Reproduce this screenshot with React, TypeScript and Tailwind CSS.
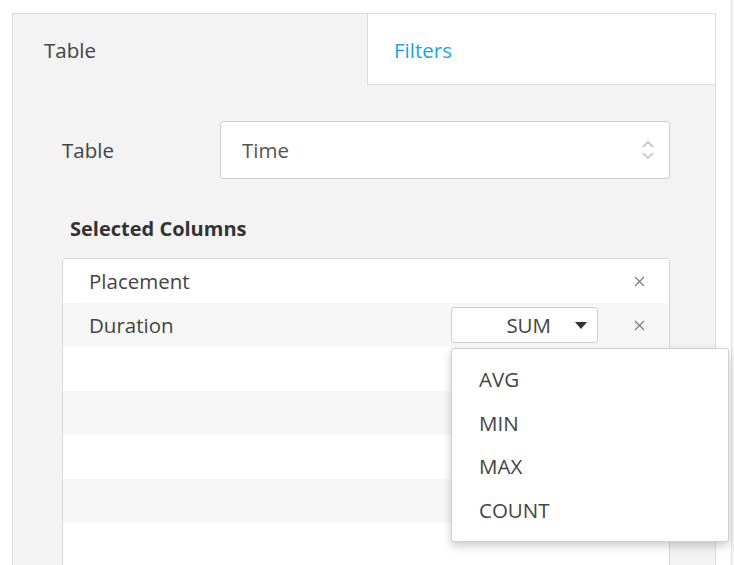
const font = { fontFamily: '"Open Sans", "Liberation Sans", sans-serif' };

const X = () => (
  <svg width="11" height="11" viewBox="0 0 11 11" className="text-[#777]">
    <path d="M1 1L10 10M10 1L1 10" stroke="currentColor" strokeWidth="1.1" />
  </svg>
);

export default function App() {
  const rows = ['bg-white', 'bg-[#f7f7f7]', 'bg-white', 'bg-[#f7f7f7]', 'bg-white', 'bg-[#f7f7f7]', 'bg-white'];
  return (
    <div style={font} className="relative h-[565px] w-[734px] overflow-hidden bg-white">
      <div className="absolute right-0 top-0 h-full w-[3px] border-l border-[#e2e2e2] bg-[#f5f5f5]" />
      <div className="ml-3 mt-[13px] w-[704px] border border-[#dcdcdc] bg-[#f3f3f3]">
        <div className="flex h-[71px]">
          <div className="flex w-[354px] items-center pl-[31px] pt-[2px] text-[20.5px] text-[#444]">Table</div>
          <div className="flex flex-1 items-center border-b border-l border-[#dcdcdc] bg-white pl-[26px] pt-[2px] text-[20.5px] text-[#1aa5e0]">Filters</div>
        </div>
        <div className="pl-[49px] pr-[45px] pt-[36px]">
          <div className="flex items-center">
            <div className="w-[158px] text-[20.5px] text-[#444]">Table</div>
            <div className="flex h-[58px] flex-1 items-center justify-between rounded-[3px] border border-[#cfcfcf] bg-white pl-[21px] pr-[14px] text-[20.5px] text-[#555]">
              <span>Time</span>
              <svg width="14" height="24" viewBox="0 0 14 24" fill="none" stroke="#bbb" strokeWidth="1.5">
                <path d="M2 9L7 4L12 9M2 15L7 20L12 15" />
              </svg>
            </div>
          </div>
          <div className="mt-[35px] pl-[8px] text-[20px] font-bold text-[#333]">Selected Columns</div>
          <div className="mt-[14px] h-[320px] overflow-hidden rounded-t-[3px] border border-[#d8d8d8] bg-white">
            {rows.map((bg, i) => (
              <div key={i} className={`flex h-[44px] items-center pl-[26px] pr-[24px] text-[20.5px] text-[#444] ${bg}`}>
                <span className="flex-1">{i === 0 ? 'Placement' : i === 1 ? 'Duration' : ''}</span>
                {i === 1 && (
                  <div className="mr-[36px] flex h-[36px] w-[147px] items-center justify-end rounded-[3px] border border-[#cfcfcf] bg-white pr-[10px] text-[20.5px] text-[#444]">
                    <span className="mr-[24px]">SUM</span>
                    <svg width="12" height="7" viewBox="0 0 12 7"><path d="M0 0H12L6 7Z" fill="#333" /></svg>
                  </div>
                )}
                {i < 2 && <X />}
              </div>
            ))}
          </div>
        </div>
      </div>
      <div className="absolute left-[451px] top-[348px] flex h-[194px] w-[278px] flex-col justify-center gap-[16px] rounded-[3px] border border-[#cfcfcf] bg-white pl-[27px] text-[20.5px] text-[#444] shadow-[0_4px_10px_rgba(0,0,0,0.2)]">
        {['AVG', 'MIN', 'MAX', 'COUNT'].map(t => (
          <div key={t} className="leading-[27.5px]">{t}</div>
        ))}
      </div>
    </div>
  );
}
